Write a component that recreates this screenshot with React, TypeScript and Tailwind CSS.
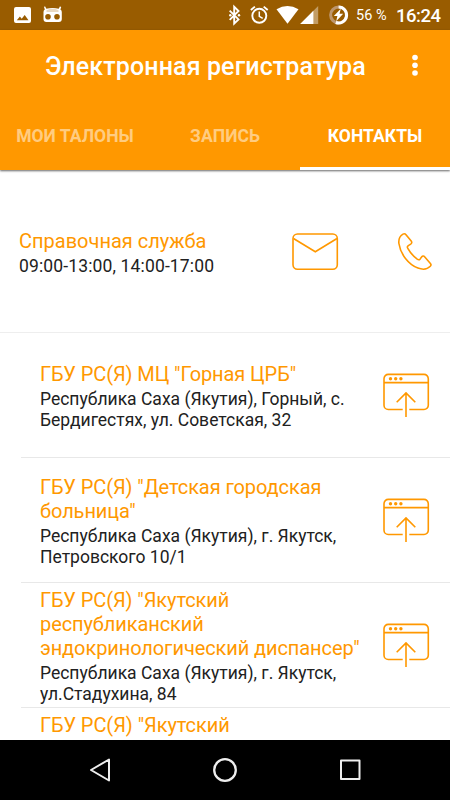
import React from "react";

function StatusBar() {
  return (
    <div className="flex h-[30px] shrink-0 items-center bg-[#995c00] text-white">
      <svg width="225" height="30" viewBox="0 0 225 30" fill="currentColor">
        <path
          fillRule="evenodd"
          d="M16 7h13a2 2 0 0 1 2 2v12a2 2 0 0 1-2 2H16a2 2 0 0 1-2-2V9a2 2 0 0 1 2-2ZM16.800 20.300h11.700l-3.800-5.300-3 3.800-1.800-2.200Z"
        />
        <path
          fillRule="evenodd"
          d="M45 6.300 46.400 8.800C50.300 7.700 54.700 7.700 58.700 8.800L60 6.300 61.200 7.200 60.400 9.600Q61.800 10.500 61.800 12V19Q61.800 22 58.800 22H46.400Q43.500 22 43.500 19V12Q43.500 10.500 44.800 9.600L44 7ZM48 13.900a2.800 2.800 0 1 0 0 5.600a2.800 2.800 0 0 0 0-5.600ZM57 13.900a2.800 2.800 0 1 0 0 5.600a2.800 2.800 0 0 0 0-5.600Z"
        />
        <path d="M46.500 10.200Q52.500 7.500 58.500 10.200V12H46.500Z" fill="#e9d9c2" />
      </svg>
      <svg width="125" height="30" viewBox="225 0 125 30" fill="none" stroke="currentColor">
        <path d="m229.700 10.600 8.800 8.800-4.300 4.200V6.800l4.300 4.200-8.800 8.800" strokeWidth="1.900" />
        <g fill="currentColor" stroke="none">
          <circle cx="230.300" cy="15.200" r="1.200" />
          <circle cx="239" cy="15.200" r="1.200" />
        </g>
        <circle cx="259.300" cy="15.800" r="7" strokeWidth="1.900" />
        <path d="M259.300 11.500v4.800l3.400 2" strokeWidth="1.500" />
        <path d="m250.900 10 4-3.400m8.800 0 4 3.400" strokeWidth="1.900" />
        <path d="M276.500 9.200q11-6.500 22 0l-11 14.600Z" fill="currentColor" stroke="none" />
        <path d="M318.200 6v18h-18Z" fill="#c29d66" stroke="none" />
        <path d="M313.400 10.800V24H300.200Z" fill="currentColor" stroke="none" />
        <circle cx="338.600" cy="15" r="8" stroke="#bd966d" strokeWidth="3" />
        <path d="M338.600 7a8 8 0 1 1-2.800 15.500" strokeWidth="3" />
        <path d="m340.800 8.700-7 7.300h3.600l-1.200 5.300 7-7.600h-3.700Z" fill="currentColor" stroke="none" />
      </svg>
      <span className="ml-[6px] w-[40px] whitespace-nowrap pt-[2px] text-[14.500px]">56 %</span>
      <span className="whitespace-nowrap pt-[1px] text-[18.500px] font-medium leading-[24px] tracking-[-0.500px]">16:24</span>
    </div>
  );
}

function Header() {
  return (
    <header className="relative z-10 flex h-[140px] shrink-0 flex-col bg-[#ff9800] text-white shadow-[0_1px_2px_rgba(0,0,0,0.6)]">
      <div className="flex h-[70px] items-center justify-between pr-[31px] pl-[45px] pt-[4px]">
        <h1 className="whitespace-nowrap text-[25px] font-medium leading-[30px] tracking-[0.120px]">Электронная регистратура</h1>
        <svg width="8" height="24" viewBox="0 0 8 24" fill="currentColor" className="mb-[5px]">
          <circle cx="4" cy="4.500" r="2.800" />
          <circle cx="4" cy="12.300" r="2.800" />
          <circle cx="4" cy="20" r="2.800" />
        </svg>
      </div>
      <nav className="grid h-[70px] grid-cols-3 whitespace-nowrap text-center text-[17.500px] font-bold leading-[24px] tracking-[0.040px]">
        <span className="h-[70px] pt-[24px] text-[#ffcc80]">МОИ ТАЛОНЫ</span>
        <span className="h-[70px] pt-[24px] text-[#ffcc80]">ЗАПИСЬ</span>
        <span className="h-[70px] border-b-[3px] border-white pt-[24px]">КОНТАКТЫ</span>
      </nav>
    </header>
  );
}

function MailIcon() {
  return (
    <svg width="48" height="40" viewBox="0 0 48 40" fill="none" stroke="#ff9800" strokeWidth="1.600" className="mt-[2px]">
      <rect x="2" y="2" width="44.300" height="35.300" rx="4.500" />
      <path d="m2.500 6.500 21.800 13.300L46 6.500" />
    </svg>
  );
}

function PhoneIcon() {
  return (
    <svg width="36" height="40" viewBox="0 0 36 40" fill="none" stroke="#ff9800" strokeWidth="1.600" strokeLinejoin="round" className="mt-[2px]">
      <path d="M5 2.100c1.200-.7 2.300-.3 3.200.8l5 6.100c.9 1.200.7 2.300-.5 3.100l-2.400 1.500c-1 .7-1.200 1.700-.5 2.800 2.400 4.300 5.500 7.800 9.400 10.800 1.100.8 2.200.7 3-.3l1.400-1.900c.9-1.200 2.200-1.300 3.200-.1l5.600 6.500c.9 1.100.8 2-.1 2.900-2.300 2.400-6.600 3.900-12.400 1.800C10.500 32.500 2.500 22.300.9 11.500.4 6.900 1.800 3.900 5 2.100Z" />
    </svg>
  );
}

function OpenSiteIcon() {
  return (
    <svg width="48" height="46" viewBox="0 0 48 46" fill="none" stroke="#ff9800" strokeWidth="1.600" className="shrink-0">
      <path d="M20.700 37.500H6.300a4.300 4.300 0 0 1-4.300-4.300V6.700a4.300 4.300 0 0 1 4.300-4.300H42a4.300 4.300 0 0 1 4.300 4.300v26.500a4.300 4.300 0 0 1-4.300 4.300H27.300M2 10.600h44.300M24 45V21.200m-9.300 9L24 21l9.300 9.200" />
      <g fill="#ff9800" stroke="none">
        <circle cx="8.500" cy="6.700" r="1.700" />
        <circle cx="13.700" cy="6.700" r="1.700" />
        <circle cx="18.900" cy="6.700" r="1.700" />
      </g>
    </svg>
  );
}

const clinics = [
  { name: ['ГБУ РС(Я) МЦ "Горная ЦРБ"'], address: ["Республика Саха (Якутия), Горный, с.", "Бердигестях, ул. Советская, 32"] },
  { name: ['ГБУ РС(Я) "Детская городская', 'больница"'], address: ["Республика Саха (Якутия), г. Якутск,", "Петровского 10/1"] },
  { name: ['ГБУ РС(Я) "Якутский', "республиканский", 'эндокринологический диспансер"'], address: ["Республика Саха (Якутия), г. Якутск,", "ул.Стадухина, 84"] },
];

function Clinic({ name, address }: { name: string[]; address: string[] }) {
  return (
    <li className="ml-[21px] flex h-[125px] items-center justify-between border-b border-[#e8e8e8] pr-[20px] pl-[19px]">
      <div className="whitespace-nowrap pt-[2px]">
        {name.map((line) => (
          <p key={line} className="text-[20px] leading-[24px] tracking-[-0.090px] text-[#ff9800]">{line}</p>
        ))}
        <div className="pt-[3px]">
          {address.map((line) => (
            <p key={line} className="text-[17.500px] leading-[21px] text-[#212121]">{line}</p>
          ))}
        </div>
      </div>
      <OpenSiteIcon />
    </li>
  );
}

function NavigationBar() {
  return (
    <footer className="flex h-[60px] shrink-0 items-center justify-between bg-black px-[88px]">
      <svg width="24" height="26" viewBox="0 0 24 26" fill="none" stroke="#eee" strokeWidth="2" strokeLinejoin="round">
        <path d="M21 2.500v21L3 13Z" />
      </svg>
      <svg width="26" height="26" viewBox="0 0 26 26" fill="none" stroke="#eee" strokeWidth="2.300">
        <circle cx="13" cy="13" r="10.800" />
      </svg>
      <svg width="24" height="26" viewBox="0 0 24 26" fill="none" stroke="#eee" strokeWidth="2" strokeLinejoin="round">
        <rect x="3" y="3.500" width="18.500" height="18.500" />
      </svg>
    </footer>
  );
}

export default function App() {
  return (
    <div className="flex h-[800px] w-[450px] flex-col overflow-hidden bg-white font-['Roboto',sans-serif]">
      <StatusBar />
      <Header />
      <main className="flex min-h-0 flex-1 flex-col overflow-hidden">
        <section className="flex h-[163px] shrink-0 items-center border-b border-[#eee] pl-[19px]">
          <div className="w-[272px] whitespace-nowrap pt-[3px]">
            <h2 className="text-[20px] leading-[24px] text-[#ff9800]">Справочная служба</h2>
            <p className="pt-[3px] text-[17.500px] leading-[21px] tracking-[0.140px] text-[#212121]">09:00-13:00, 14:00-17:00</p>
          </div>
          <MailIcon />
          <div className="ml-[59px]"><PhoneIcon /></div>
        </section>
        <ul className="shrink-0">
          {clinics.map((clinic) => (
            <Clinic key={clinic.name.join(" ")} {...clinic} />
          ))}
        </ul>
        <p className="shrink-0 pt-[5px] pl-[40px] text-[20px] leading-[24px] tracking-[-0.060px] text-[#ff9800]">ГБУ РС(Я) "Якутский</p>
      </main>
      <NavigationBar />
    </div>
  );
}
